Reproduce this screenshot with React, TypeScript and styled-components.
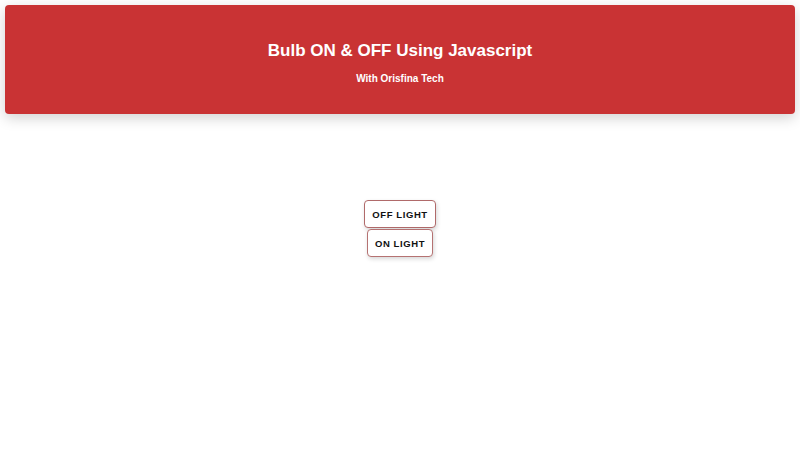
import React, { useState } from 'react';
import styled, { createGlobalStyle } from 'styled-components';

const GlobalStyle = createGlobalStyle`
  body {
    margin: 0;
    background: #ffffff;
    font-family: "Liberation Sans", Arial, sans-serif;
  }
`;

const Page = styled.div`
  padding: 5px;
  min-height: 440px;
`;

const Header = styled.header`
  background-color: #c93334;
  height: 109px;
  border-radius: 4px;
  box-shadow: 0 4px 14px rgba(0, 0, 0, 0.18);
  display: flex;
  flex-direction: column;
  align-items: center;
  color: #ffffff;
`;

const Title = styled.h1`
  margin: 36px 0 0;
  font-size: 17px;
  line-height: 20px;
  font-weight: bold;
`;

const Subtitle = styled.h3`
  margin: 12px 0 0;
  font-size: 10px;
  line-height: 12px;
  font-weight: bold;
`;

const Controls = styled.div`
  display: flex;
  flex-direction: column;
  align-items: center;
  gap: 1px;
  margin-top: 86px;
`;

const LightButton = styled.button<{ $active?: boolean }>`
  font-family: "Liberation Sans", Arial, sans-serif;
  font-size: 9.5px;
  font-weight: bold;
  letter-spacing: 0.6px;
  color: #111111;
  background: #ffffff;
  border: 1px solid ${p => (p.$active ? '#b06a6a' : '#b57272')};
  border-radius: 4px;
  padding: 0 7px;
  height: 28px;
  cursor: pointer;
  box-shadow: 1px 2px 4px rgba(0, 0, 0, 0.16);
`;

const App: React.FC = () => {
  const [on, setOn] = useState(false);

  return (
    <Page>
      <GlobalStyle />
      <Header>
        <Title>Bulb ON &amp; OFF Using Javascript</Title>
        <Subtitle>With Orisfina Tech</Subtitle>
      </Header>
      <Controls>
        <LightButton $active={!on} onClick={() => setOn(false)}>OFF LIGHT</LightButton>
        <LightButton $active={on} onClick={() => setOn(true)}>ON LIGHT</LightButton>
      </Controls>
    </Page>
  );
};

export default App;
